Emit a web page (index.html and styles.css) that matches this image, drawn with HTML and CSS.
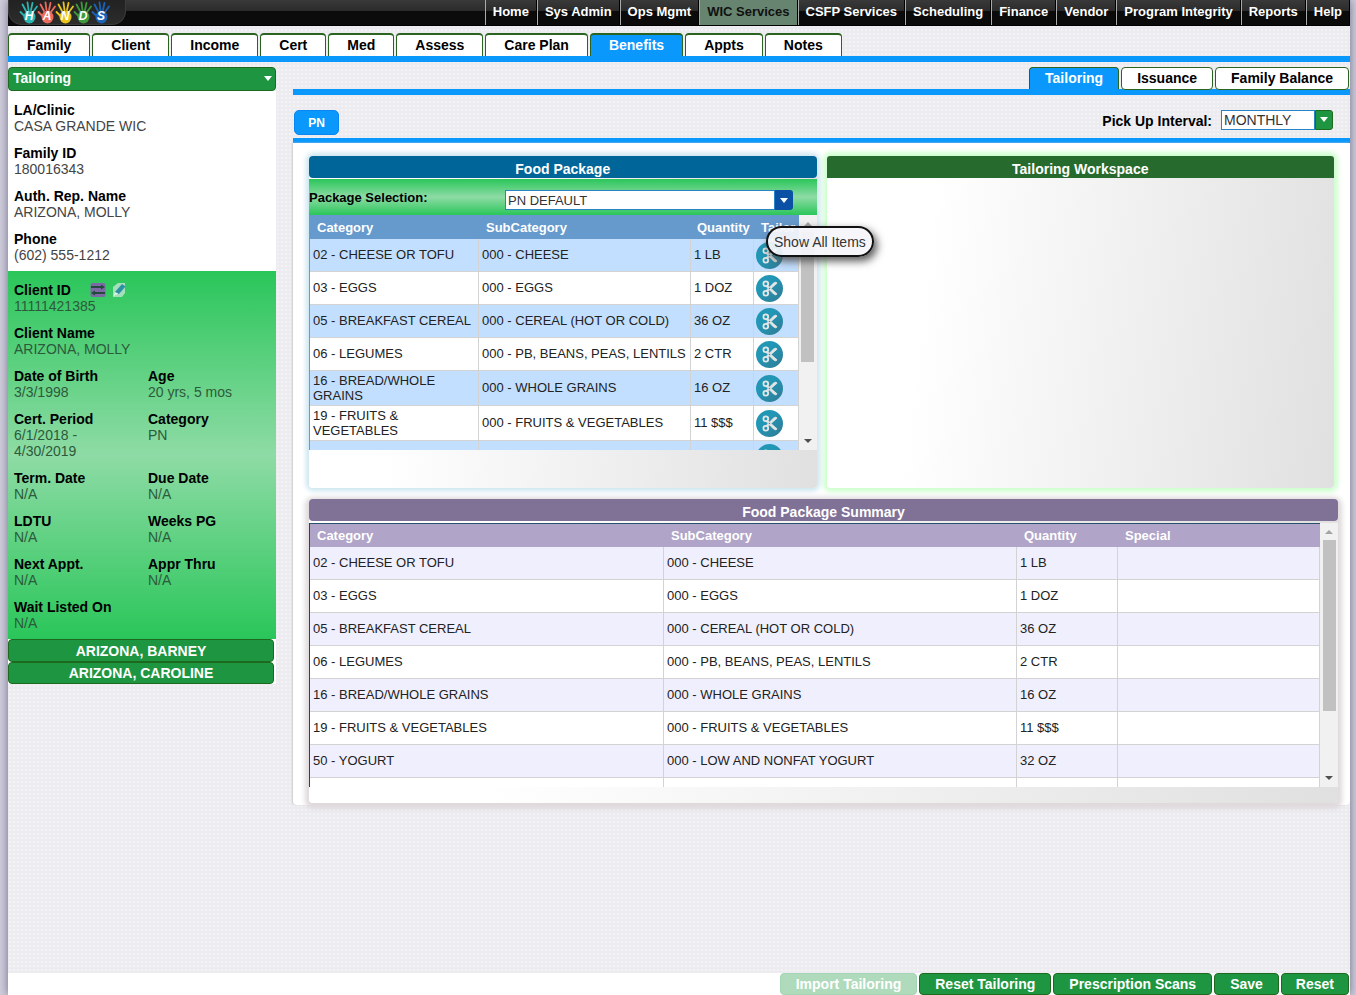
FILE: index.html
```html
<!DOCTYPE html>
<html lang="en">
<head>
	<title>HANDS - Tailoring</title>
	<meta charset="utf-8" />
	<meta name="viewport" content="width=device-width, initial-scale=1.0" />
	<link rel="stylesheet" href="styles.css">
</head>
<body>

<svg width="0" height="0" class="defs">
	<defs>
		<linearGradient id="disc" x1="0" y1="0" x2="1" y2="1">
			<stop offset="0.4" stop-color="#2196b5" />
			<stop offset="1" stop-color="#337a92" />
		</linearGradient>
		<symbol id="scissors" viewBox="0 0 27 27">
			<circle cx="13.5" cy="13.5" r="13.5" fill="url(#disc)" />
			<g fill="none" stroke="#e4e6e6" stroke-width="1.8">
				<circle cx="9.8" cy="8.8" r="2.4" />
				<circle cx="9.8" cy="18.2" r="2.4" />
			</g>
			<path d="M11.2 10.2 21 18.8 20 20 17.6 19 10.2 11.6z M11.2 16.8 21 8.200 20 7 17.6 8 10.2 15.400z" fill="#e4e6e6" stroke="#e4e6e6" stroke-width="0.8" />
		</symbol>
		<symbol id="hand" viewBox="0 0 20 24">
			<g fill="none" stroke="currentColor" stroke-linecap="round" stroke-width="1.8">
				<path d="M5.500 16 1.5 12" />
				<path d="M7 11 3.500 4.5" />
				<path d="M9.500 10 8.500 2.500" />
				<path d="M12 10 13.500 3" />
				<path d="M14 12 18 6.500" />
			</g>
			<ellipse cx="10.5" cy="17" rx="6" ry="6.5" fill="currentColor" />
		</symbol>
	</defs>
</svg>

<div class="page">

	<header class="topbar">
		<a href="#" class="logo" aria-label="HANDS">
			<span class="hand hand-h"><svg><use href="#hand" /></svg><b>H</b></span>
			<span class="hand hand-a"><svg><use href="#hand" /></svg><b>A</b></span>
			<span class="hand hand-n"><svg><use href="#hand" /></svg><b>N</b></span>
			<span class="hand hand-d"><svg><use href="#hand" /></svg><b>D</b></span>
			<span class="hand hand-s"><svg><use href="#hand" /></svg><b>S</b></span>
		</a>
		<nav class="menu">
			<a href="#">Home</a>
			<a href="#">Sys Admin</a>
			<a href="#">Ops Mgmt</a>
			<a href="#" class="current">WIC Services</a>
			<a href="#">CSFP Services</a>
			<a href="#">Scheduling</a>
			<a href="#">Finance</a>
			<a href="#">Vendor</a>
			<a href="#">Program Integrity</a>
			<a href="#">Reports</a>
			<a href="#">Help</a>
		</nav>
	</header>

	<nav class="tabs">
		<a href="#">Family</a>
		<a href="#">Client</a>
		<a href="#">Income</a>
		<a href="#">Cert</a>
		<a href="#">Med</a>
		<a href="#">Assess</a>
		<a href="#">Care Plan</a>
		<a href="#" class="active">Benefits</a>
		<a href="#">Appts</a>
		<a href="#">Notes</a>
	</nav>

	<div class="columns">

		<aside class="sidebar">
			<button type="button" class="section-btn">Tailoring <i class="arrow"></i></button>
			<dl class="info family">
				<div><dt>LA/Clinic</dt><dd>CASA GRANDE WIC</dd></div>
				<div><dt>Family ID</dt><dd>180016343</dd></div>
				<div><dt>Auth. Rep. Name</dt><dd>ARIZONA, MOLLY</dd></div>
				<div><dt>Phone</dt><dd>(602) 555-1212</dd></div>
			</dl>
			<dl class="info client">
				<div class="wide">
					<dt>Client ID
						<button type="button" class="icon-btn" aria-label="Switch client">
							<svg width="16" height="16" viewBox="0 0 16 16"><rect x="0.5" y="1" width="15" height="14" rx="2" fill="#7d6aa5" /><path d="M1 4h10V2.500l4 2.500-4 2.500V6H1z M15 10H5V8.500L1 11l4 2.500V12h10z" fill="#234a3c" /></svg>
						</button>
						<button type="button" class="icon-btn" aria-label="Edit client">
							<svg width="16" height="16" viewBox="0 0 16 16"><path d="M2 5 7 1h7v10l-3 4H2z" fill="#a5e0bb" /><path d="M4 10 11 2l3.5 2.5L8 12l-4 1.5z" fill="#2c91a5" /><path d="M4 10 8 12l-5.5 2z" fill="#e4f4e8" /></svg>
						</button>
					</dt>
					<dd>11111421385</dd>
				</div>
				<div class="wide"><dt>Client Name</dt><dd>ARIZONA, MOLLY</dd></div>
				<div><dt>Date of Birth</dt><dd>3/3/1998</dd></div>
				<div><dt>Age</dt><dd>20 yrs, 5 mos</dd></div>
				<div><dt>Cert. Period</dt><dd>6/1/2018 -<br>4/30/2019</dd></div>
				<div><dt>Category</dt><dd>PN</dd></div>
				<div><dt>Term. Date</dt><dd>N/A</dd></div>
				<div><dt>Due Date</dt><dd>N/A</dd></div>
				<div><dt>LDTU</dt><dd>N/A</dd></div>
				<div><dt>Weeks PG</dt><dd>N/A</dd></div>
				<div><dt>Next Appt.</dt><dd>N/A</dd></div>
				<div><dt>Appr Thru</dt><dd>N/A</dd></div>
				<div class="wide"><dt>Wait Listed On</dt><dd>N/A</dd></div>
			</dl>
			<div class="members">
				<button type="button">ARIZONA, BARNEY</button>
				<button type="button">ARIZONA, CAROLINE</button>
			</div>
		</aside>

		<main class="main">
			<nav class="subtabs">
				<a href="#" class="active">Tailoring</a>
				<a href="#">Issuance</a>
				<a href="#">Family Balance</a>
			</nav>
			<div class="toolbar">
				<button type="button" class="pn-btn">PN</button>
				<label for="interval">Pick Up Interval:</label>
				<span class="combo green">
					<select id="interval"><option>MONTHLY</option></select>
					<i class="drop"></i>
				</span>
			</div>

			<div class="content">
				<div class="panels">
					<section class="panel food">
						<h2>Food Package</h2>
						<div class="selection">
							<label for="package">Package Selection:</label>
							<span class="combo blue">
								<select id="package"><option>PN DEFAULT</option></select>
								<i class="drop"></i>
							</span>
						</div>
						<div class="scroller">
							<div class="view">
								<table class="grid">
									<colgroup><col class="c-cat"><col class="c-sub"><col class="c-qty"><col></colgroup>
									<thead>
										<tr><th>Category</th><th>SubCategory</th><th>Quantity</th><th>Tailor</th></tr>
									</thead>
									<tbody>
										<tr><td>02 - CHEESE OR TOFU</td><td>000 - CHEESE</td><td>1 LB</td><td><button type="button" class="cut" aria-label="Tailor"><svg><use href="#scissors" /></svg></button></td></tr>
										<tr><td>03 - EGGS</td><td>000 - EGGS</td><td>1 DOZ</td><td><button type="button" class="cut" aria-label="Tailor"><svg><use href="#scissors" /></svg></button></td></tr>
										<tr><td>05 - BREAKFAST CEREAL</td><td>000 - CEREAL (HOT OR COLD)</td><td>36 OZ</td><td><button type="button" class="cut" aria-label="Tailor"><svg><use href="#scissors" /></svg></button></td></tr>
										<tr><td>06 - LEGUMES</td><td>000 - PB, BEANS, PEAS, LENTILS</td><td>2 CTR</td><td><button type="button" class="cut" aria-label="Tailor"><svg><use href="#scissors" /></svg></button></td></tr>
										<tr class="tall"><td>16 - BREAD/WHOLE GRAINS</td><td>000 - WHOLE GRAINS</td><td>16 OZ</td><td><button type="button" class="cut" aria-label="Tailor"><svg><use href="#scissors" /></svg></button></td></tr>
										<tr class="tall"><td>19 - FRUITS &amp; VEGETABLES</td><td>000 - FRUITS &amp; VEGETABLES</td><td>11 $$$</td><td><button type="button" class="cut" aria-label="Tailor"><svg><use href="#scissors" /></svg></button></td></tr>
										<tr><td></td><td></td><td></td><td><button type="button" class="cut" aria-label="Tailor"><svg><use href="#scissors" /></svg></button></td></tr>
									</tbody>
								</table>
							</div>
							<div class="bar"><i class="up"></i><i class="thumb"></i><i class="down"></i></div>
						</div>
						<div class="tooltip" role="tooltip">Show All Items</div>
					</section>

					<section class="panel workspace">
						<h2>Tailoring Workspace</h2>
					</section>
				</div>

				<section class="panel summary">
					<h2>Food Package Summary</h2>
					<div class="scroller">
						<div class="view">
							<table class="grid">
								<colgroup><col class="c-cat"><col class="c-sub"><col class="c-qty"><col></colgroup>
								<thead>
									<tr><th>Category</th><th>SubCategory</th><th>Quantity</th><th>Special</th></tr>
								</thead>
								<tbody>
									<tr><td>02 - CHEESE OR TOFU</td><td>000 - CHEESE</td><td>1 LB</td><td></td></tr>
									<tr><td>03 - EGGS</td><td>000 - EGGS</td><td>1 DOZ</td><td></td></tr>
									<tr><td>05 - BREAKFAST CEREAL</td><td>000 - CEREAL (HOT OR COLD)</td><td>36 OZ</td><td></td></tr>
									<tr><td>06 - LEGUMES</td><td>000 - PB, BEANS, PEAS, LENTILS</td><td>2 CTR</td><td></td></tr>
									<tr><td>16 - BREAD/WHOLE GRAINS</td><td>000 - WHOLE GRAINS</td><td>16 OZ</td><td></td></tr>
									<tr><td>19 - FRUITS &amp; VEGETABLES</td><td>000 - FRUITS &amp; VEGETABLES</td><td>11 $$$</td><td></td></tr>
									<tr><td>50 - YOGURT</td><td>000 - LOW AND NONFAT YOGURT</td><td>32 OZ</td><td></td></tr>
									<tr><td></td><td></td><td></td><td></td></tr>
								</tbody>
							</table>
						</div>
						<div class="bar"><i class="up"></i><i class="thumb"></i><i class="down"></i></div>
					</div>
				</section>
			</div>
		</main>
	</div>

	<footer class="actions">
		<button type="button" disabled>Import Tailoring</button>
		<button type="button">Reset Tailoring</button>
		<button type="button">Prescription Scans</button>
		<button type="button">Save</button>
		<button type="button">Reset</button>
	</footer>

</div>

</body>
</html>
```
FILE: styles.css
```css
* { box-sizing:border-box; }
html { height:100%; }
body { height:100%; margin:0; padding:0 6px 0 8px; overflow:hidden; font-family:Arial, "Liberation Sans", sans-serif; font-size:14px; line-height:16px; color:#000; background:#cfcddb; }
button, select { font-family:inherit; font-size:14px; line-height:16px; margin:0; cursor:pointer; }
a { text-decoration:none; color:inherit; }
h2, dl, dd { margin:0; }
.defs { position:absolute; }

.page {
	display:flex;
	flex-direction:column;
	min-height:100%;
	background-color:#ececf0;
	background-image:radial-gradient(circle, #f3f3f5 1px, transparent 1px);
	background-size:4px 4px;
	box-shadow:0 0 9px #6f6d88;
}

/* top bar */
.topbar { display:flex; justify-content:space-between; height:26px; background:linear-gradient(#393939, #2b2b2b 11px, #0b0b0b 11px, #0b0b0b); border-bottom:1px solid #000; }
.logo { display:flex; width:118px; height:25px; padding-left:10px; background:linear-gradient(#222, #2c2c2c); border:1px solid #3c3c3c; border-top:0; border-radius:0 0 14px 14px; overflow:hidden; }
.hand { display:grid; width:18px; height:24px; place-items:end center; }
.hand svg { grid-area:1/1; width:20px; height:24px; }
.hand b { grid-area:1/1; font-size:12px; line-height:15px; font-style:italic; color:#fff; }
.hand-h { color:#2bb5b0; }
.hand-a { color:#ee6a5c; height:21px; }
.hand-n { color:#e8c41c; }
.hand-d { color:#3f9a3c; height:22px; }
.hand-s { color:#1b62b8; }
.menu { display:flex; }
.menu a { padding:4px 7px 5px; border-left:1px solid #aaa; border-right:1px solid #000; color:#fff; font-size:13px; font-weight:bold; white-space:nowrap; }
.menu a.current { background:#66846f; color:#111; }

/* tabs */
.tabs { display:flex; gap:2px; height:36px; padding-top:7px; border-bottom:6px solid #0a98fc; }
.tabs a { padding:2px 18px 5px; border:1px solid #2b6420; border-top-width:2px; border-bottom:0; border-radius:4px 4px 0 0; background:#fff; font-weight:bold; white-space:nowrap; }
.tabs a.active, .subtabs a.active { background:#0a98fc; color:#fff; }

.columns { display:flex; gap:17px; flex:1; align-items:flex-start; padding-top:5px; }

/* sidebar */
.sidebar { flex:none; width:268px; }
.section-btn { display:flex; justify-content:space-between; width:100%; height:24px; padding:2px 3px 4px 4px; border:1px solid #1d6a1f; border-radius:4px; background:#1e9641; color:#fff; font-weight:bold; text-align:left; }
.arrow { align-self:center; border:4px solid transparent; border-top:5px solid #fff; border-bottom:0; }
.info { padding:11px 5px 0 6px; }
.info dt { font-weight:bold; }
.info dd { color:#444; }
.info > div { padding-bottom:11px; }
.family { height:180px; background:#fff; }
.client { display:grid; grid-template-columns:134px 1fr; height:368px; background:linear-gradient(#2ac65a, #8edba5 50%, #2ac65a); }
.client dd { color:#2c5a3b; }
.client .wide { grid-column:1 / 3; }
.icon-btn { display:inline-block; width:16px; height:16px; padding:0; border:0; background:none; vertical-align:top; }
.icon-btn:first-of-type { margin:0 1px 0 15px; }
.icon-btn svg { display:block; }
.members { padding-right:2px; background:#fff; }
.members button { display:block; width:100%; height:23px; padding:2px; border:1px solid #1d6a1f; border-radius:4px; background:#1e9641; color:#fff; font-weight:bold; }
.members button + button { height:22px; }

/* main */
.main { flex:1; min-width:0; }
.subtabs { display:flex; justify-content:flex-end; gap:2px; height:28px; padding-right:1px; border-bottom:6px solid #0a98fc; }
.subtabs a { height:23px; padding:2px 15px; border:1px solid #2b6420; border-radius:4px; background:#fff; font-weight:bold; white-space:nowrap; }
.subtabs a.active { height:22px; border-bottom:0; border-radius:4px 4px 0 0; }
.toolbar { display:flex; align-items:center; height:48px; padding:12px 17px 0 1px; border-bottom:5px solid #0a98fc; }
.pn-btn { width:45px; height:25px; margin-right:auto; padding:0; border:1px solid #0a86f0; border-radius:5px; background:#0a98fc; color:#fff; font-size:12px; font-weight:bold; }
.toolbar label { margin:0 9px 4px 0; font-weight:bold; }

.combo { display:flex; height:20px; }
.combo select { flex:1; min-width:0; padding:0 2px; appearance:none; border:1px solid #2a84c4; border-radius:0; background:#fff; color:#333; }
.combo .drop { display:flex; width:18px; align-items:center; justify-content:center; border-radius:0 3px 3px 0; pointer-events:none; }
.drop::before { content:""; border:4px solid transparent; border-top:5px solid #fff; border-bottom:0; }
.green { width:112px; margin-bottom:6px; }
.green .drop { background:#1e9641; border:1px solid #1d6a1f; }
.blue { width:288px; }
.blue select { padding-top:1px; font-size:13px; }
.blue .drop { background:#0a51a5; }

.content { padding:13px 12px 1px 16px; height:662px; background:#fff; border-radius:0 0 4px 4px; box-shadow:-1px 0 2px #ccc; }
.panels { display:flex; gap:10px; padding-right:4px; }
.panel { background:linear-gradient(97deg, #fff 20%, #e0e0e0); border-radius:4px; }
.panel h2 { height:22px; padding-top:5px; border-radius:4px; color:#fff; font-size:14px; line-height:16px; text-align:center; }
.panels .panel { flex:1; height:332px; }
.food { position:relative; box-shadow:0 0 5px 3px #cce6f0; }
.food h2 { background:#006699; }
.workspace { box-shadow:0 0 5px 4px #cfffcf; }
.workspace h2 { border-radius:3px 3px 0 0; background:#266b2d; }

.selection { display:grid; grid-template-columns:196px 1fr; height:36px; margin-top:1px; background:linear-gradient(#2ac65a, #8edba5 50%, #2ac65a); }
.selection label { padding-top:11px; font-size:13px; line-height:15px; font-weight:bold; }
.selection .combo { margin-top:11px; }

.scroller { display:flex; }
.view { flex:1; min-width:0; overflow:hidden; }
.grid { width:100%; table-layout:fixed; border-spacing:0; color:#222; font-size:13px; line-height:15px; }
.grid th { height:24px; padding:0 7px; color:#fff; text-align:left; }
.grid td { height:33px; padding:0 3px 1px; border-right:1px solid #d3d3d3; border-bottom:1px solid #d3d3d3; }
.food .view { height:235px; border-left:1px solid #6699cc; }
.food thead { background:#6699cc; }
.food tbody tr { background:#fff; }
.food tbody tr:nth-child(odd) { background:#c2dfff; }
.food .tall td { height:35px; }
.food .c-cat { width:169px; }
.food .c-sub { width:212px; }
.food .c-qty { width:63px; }
.food td:last-child { padding:1px 2px 0; }
.food th:nth-child(3) { padding:0 6px; }
.cut { display:block; width:27px; height:27px; padding:0; border:0; background:none; }
.cut svg { display:block; width:27px; height:27px; }

.bar { display:flex; flex-direction:column; align-items:center; width:18px; background:#f1f1f1; }
.bar .up { margin:7px 0 6px; border:4px solid transparent; border-bottom:4px solid #a3a3a3; border-top:0; }
.bar .down { margin:auto 0 7px; border:4px solid transparent; border-top:4px solid #505050; border-bottom:0; }
.bar .thumb { width:13px; background:#c1c1c1; }
.food .thumb { height:130px; }

.tooltip { position:absolute; left:457px; top:70px; padding:6px 6px 5px; border:2px solid #111; border-radius:16px; background:rgba(245,245,250,0.93); color:#333; box-shadow:3px 4px 9px #555; white-space:nowrap; }

.summary { height:304px; margin-top:11px; box-shadow:0 2px 5px 4px #dfd9dc; }
.summary h2 { background:#807197; }
.summary .scroller { padding-top:2px; }
.summary .view { height:264px; border-top:1px solid #26506b; border-left:1px solid #26406b; }
.summary thead { background:#b0a4c8; }
.summary th { height:23px; }
.summary tbody tr { background:#fff; }
.summary tbody tr:nth-child(odd) { background:#f0effd; }
.summary .c-cat { width:354px; }
.summary .c-sub { width:353px; }
.summary .c-qty { width:101px; }
.summary .thumb { height:171px; }

/* footer */
.actions { display:flex; justify-content:flex-end; gap:2px; height:22px; padding-right:1px; background:#fff; }
.actions button { height:22px; padding:2px 14px; border:1px solid #1d6a1f; border-radius:4px; background:#1e9641; color:#fff; font-weight:bold; white-space:nowrap; }
.actions button:disabled { border-color:#a5d6b3; background:#afdabc; }
.actions button:not(:last-child) { padding:2px 15px; }
```
